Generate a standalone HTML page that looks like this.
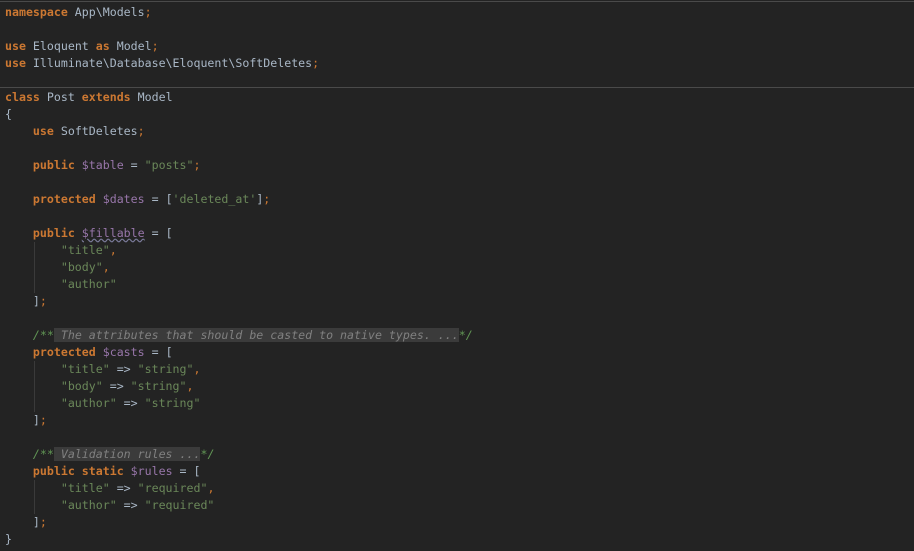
<!DOCTYPE html>
<html><head><style>
body{margin:0;width:914px;height:551px;background:#232323;overflow:hidden;position:relative;font-family:"DejaVu Sans Mono","Liberation Mono",monospace;font-size:11.6px;color:#a9b7c6}
.top{position:absolute;left:0;top:1px;width:914px;height:1px;background:#4a4a4a}
.sep{position:absolute;left:0;top:87px;width:914px;height:1px;background:#4a4a4a}
pre{margin:0;position:absolute;left:5px;top:4px;font:inherit;line-height:17px;white-space:pre}
.k{color:#cc7832;font-weight:bold}
.o{color:#cc7832}
.v{color:#9876aa}
.s{color:#6a8759}
.d{color:#629755;font-style:italic}
.f{color:#808080;font-style:italic;background:#3b3b3b}
.w{text-decoration:underline wavy #7a7a9a}
.g{position:absolute;left:34px;width:1px;background:#3a3a3a}
</style></head><body>
<div class="top"></div><div class="sep"></div>
<div class="g" style="top:242px;height:51px"></div>
<div class="g" style="top:361px;height:51px"></div>
<div class="g" style="top:480px;height:34px"></div>
<pre><span class="k">namespace</span> App\Models<span class="o">;</span>

<span class="k">use</span> Eloquent <span class="k">as</span> Model<span class="o">;</span>
<span class="k">use</span> Illuminate\Database\Eloquent\SoftDeletes<span class="o">;</span>

<span class="k">class</span> Post <span class="k">extends</span> Model
{
    <span class="k">use</span> SoftDeletes<span class="o">;</span>

    <span class="k">public</span> <span class="v">$table</span> = <span class="s">"posts"</span><span class="o">;</span>

    <span class="k">protected</span> <span class="v">$dates</span> = [<span class="s">'deleted_at'</span>]<span class="o">;</span>

    <span class="k">public</span> <span class="v w">$fillable</span> = [
        <span class="s">"title"</span><span class="o">,</span>
        <span class="s">"body"</span><span class="o">,</span>
        <span class="s">"author"</span>
    ]<span class="o">;</span>

    <span class="d">/**</span><span class="f"> The attributes that should be casted to native types. ...</span><span class="d">*/</span>
    <span class="k">protected</span> <span class="v">$casts</span> = [
        <span class="s">"title"</span> =&gt; <span class="s">"string"</span><span class="o">,</span>
        <span class="s">"body"</span> =&gt; <span class="s">"string"</span><span class="o">,</span>
        <span class="s">"author"</span> =&gt; <span class="s">"string"</span>
    ]<span class="o">;</span>

    <span class="d">/**</span><span class="f"> Validation rules ...</span><span class="d">*/</span>
    <span class="k">public</span> <span class="k">static</span> <span class="v">$rules</span> = [
        <span class="s">"title"</span> =&gt; <span class="s">"required"</span><span class="o">,</span>
        <span class="s">"author"</span> =&gt; <span class="s">"required"</span>
    ]<span class="o">;</span>
}</pre>
</body></html>
